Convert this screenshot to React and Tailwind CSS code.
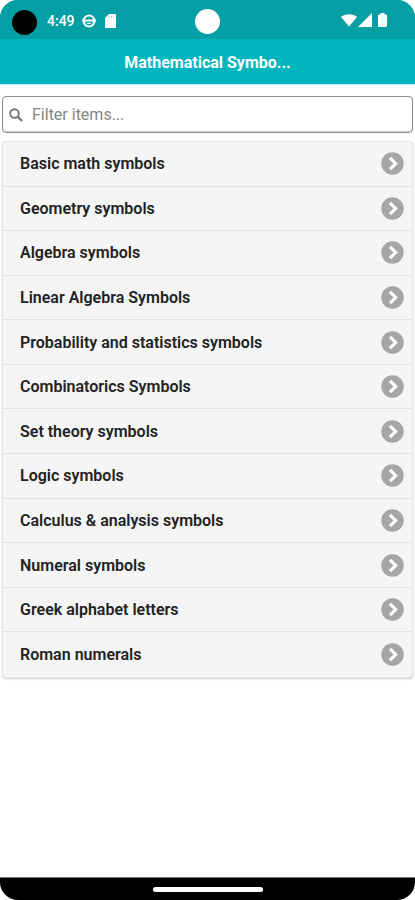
import React, { useState } from 'react';

const categories = [
  'Basic math symbols',
  'Geometry symbols',
  'Algebra symbols',
  'Linear Algebra Symbols',
  'Probability and statistics symbols',
  'Combinatorics Symbols',
  'Set theory symbols',
  'Logic symbols',
  'Calculus & analysis symbols',
  'Numeral symbols',
  'Greek alphabet letters',
  'Roman numerals',
];

function StatusBar() {
  return (
    <div className="grid h-[39px] grid-cols-[1fr_auto_1fr] items-center bg-[#039fa4] px-3 pt-1 text-white">
      <div className="flex items-center pt-[2px]">
        <span className="h-[25px] w-[25px] rounded-full bg-black" />
        <span className="ml-[10px] pb-[3px] text-sm font-medium">4:49</span>
        <svg className="mb-[3px] ml-[7px] h-[14px] w-[14px]" viewBox="0 0 14 14" fill="none" stroke="currentColor" aria-hidden="true">
          <circle cx="7" cy="7" r="5.5" strokeWidth="2" />
          <path d="M0 6.4h14" strokeWidth="2" />
          <path d="M5 9.4h4" strokeWidth="1.4" />
          <path d="M2.5 7v2.500M11.500 7v2.500" strokeWidth="1.6" />
        </svg>
        <svg className="mb-[3px] ml-[9px] h-[14px] w-[11px]" viewBox="0 0 11 14" aria-hidden="true">
          <path d="M4 0h6a1 1 0 0 1 1 1v12a1 1 0 0 1-1 1H1a1 1 0 0 1-1-1V4z" fill="currentColor" />
          <path d="M4.3 1.8v1.800M6.500 1.800v1.800M8.700 1.800v1.800" stroke="#8fd5d8" strokeWidth="0.9" />
        </svg>
      </div>
      <span className="h-[25px] w-[25px] rounded-full bg-white" />
      <div className="flex items-center justify-end pr-4 pb-[3px]">
        <svg className="h-[14px] w-[16px]" viewBox="0 0 16 14" fill="currentColor" aria-hidden="true">
          <path d="M8 13.5 0 4C4 .2 12 .2 16 4z" />
        </svg>
        <svg className="ml-px h-[14px] w-[14px]" viewBox="0 0 14 14" fill="currentColor" aria-hidden="true">
          <path d="M14 0v14H0z" />
        </svg>
        <svg className="ml-[6px] h-[14px] w-[9px]" viewBox="0 0 9 14" fill="currentColor" aria-hidden="true">
          <path d="M2.5 0h4v1.5H8a1 1 0 0 1 1 1V13a1 1 0 0 1-1 1H1a1 1 0 0 1-1-1V2.5a1 1 0 0 1 1-1h1.500z" />
        </svg>
      </div>
    </div>
  );
}

export default function App() {
  const [filter, setFilter] = useState('');
  const items = categories.filter((name) => name.toLowerCase().includes(filter.toLowerCase()));

  return (
    <div className="flex min-h-screen flex-col bg-white font-['Roboto',sans-serif] text-base">
      <header className="overflow-hidden rounded-t-[18px] border-b border-[#b5f1f4] bg-[#00b5bd]">
        <StatusBar />
        <h1 className="flex h-[45px] items-center justify-center pt-[3px] font-bold text-white">
          Mathematical Symbo...
        </h1>
      </header>

      <main className="flex-1 px-[2px] pt-[11px]">
        <label className="flex h-[37px] items-center rounded border border-[#8c8c8c] bg-white pl-[6px] shadow-[inset_0_-1px_1px_#ccc]">
          <svg className="h-[14px] w-[14px] shrink-0" viewBox="0 0 14 14" fill="none" stroke="#757575" aria-hidden="true">
            <circle cx="5.5" cy="5.5" r="4.3" strokeWidth="1.9" />
            <path d="m8.7 8.7 4.3 4.3" strokeWidth="2.3" />
          </svg>
          <input
            type="text"
            aria-label="Filter items"
            placeholder="Filter items..."
            value={filter}
            onChange={(e) => setFilter(e.target.value)}
            className="ml-[9px] min-w-0 flex-1 bg-transparent outline-none placeholder:text-[#858585]"
          />
        </label>

        <ul className="mt-2 grid min-h-[537px] auto-rows-fr divide-y divide-[#e2e2e2] overflow-hidden rounded border border-[#e6e6e6] bg-[#f5f5f5] shadow-[0_1px_2px_#ccc]">
          {items.map((name) => (
            <li key={name} className="flex">
              <a href="#" className="flex flex-1 items-center justify-between pl-[17px] pr-2 font-semibold text-[#222]">
                <span className="pt-px">{name}</span>
                <svg className="h-[23px] w-[23px]" viewBox="0 0 23 23" fill="none" aria-hidden="true">
                  <circle cx="11.5" cy="11.5" r="11.2" fill="#a6a6a6" />
                  <path d="m9 5.8 5.6 5.7L9 17.2" stroke="#fff" strokeWidth="3.2" />
                </svg>
              </a>
            </li>
          ))}
        </ul>
      </main>

      <footer className="flex h-[23px] items-center justify-center rounded-b-[18px] border-t border-[#777] bg-black">
        <span className="h-[5px] w-[110px] rounded-full bg-white" />
      </footer>
    </div>
  );
}
